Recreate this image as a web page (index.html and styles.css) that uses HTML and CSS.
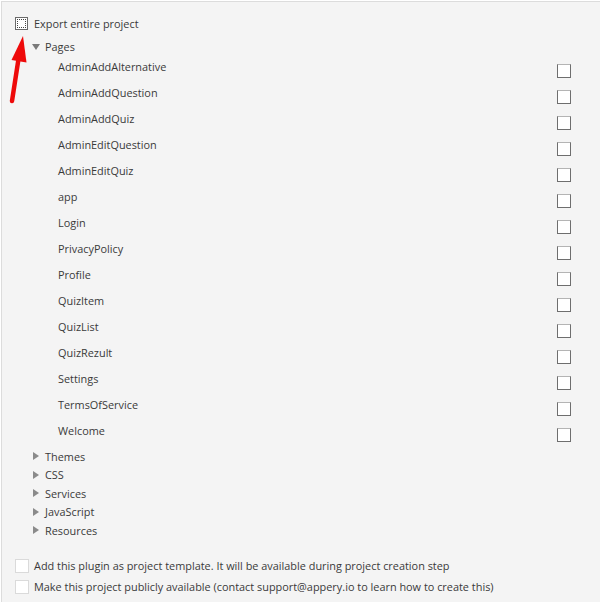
FILE: index.html
```html
<!DOCTYPE html>
<html>
<head>
<meta charset="utf-8">
<link rel="stylesheet" href="styles.css">
</head>
<body>
<div class="panel">
  <div class="export-row">
    <span class="cb-focus"><span class="cb-dots"></span></span>
    <span class="label">Export entire project</span>
  </div>
  <div class="folder open">
    <span class="tri-down"></span><span class="label">Pages</span>
  </div>
  <ul class="pages">
    <li><span>AdminAddAlternative</span><span class="cb"></span></li>
    <li><span>AdminAddQuestion</span><span class="cb"></span></li>
    <li><span>AdminAddQuiz</span><span class="cb"></span></li>
    <li><span>AdminEditQuestion</span><span class="cb"></span></li>
    <li><span>AdminEditQuiz</span><span class="cb"></span></li>
    <li><span>app</span><span class="cb"></span></li>
    <li><span>Login</span><span class="cb"></span></li>
    <li><span>PrivacyPolicy</span><span class="cb"></span></li>
    <li><span>Profile</span><span class="cb"></span></li>
    <li><span>QuizItem</span><span class="cb"></span></li>
    <li><span>QuizList</span><span class="cb"></span></li>
    <li><span>QuizRezult</span><span class="cb"></span></li>
    <li><span>Settings</span><span class="cb"></span></li>
    <li><span>TermsOfService</span><span class="cb"></span></li>
    <li><span>Welcome</span><span class="cb"></span></li>
  </ul>
  <ul class="folders">
    <li><span class="tri-right"></span>Themes</li>
    <li><span class="tri-right"></span>CSS</li>
    <li><span class="tri-right"></span>Services</li>
    <li><span class="tri-right"></span>JavaScript</li>
    <li><span class="tri-right"></span>Resources</li>
  </ul>
  <div class="options">
    <div class="opt"><span class="cb-light"></span>Add this plugin as project template. It will be available during project creation step</div>
    <div class="opt"><span class="cb-light"></span>Make this project publicly available (contact support@appery.io to learn how to create this)</div>
  </div>
  <svg class="arrow" width="40" height="110" viewBox="0 0 40 110">
    <line x1="11" y1="100" x2="17.5" y2="58" stroke="#ee0a0a" stroke-width="4.5" stroke-linecap="round"/>
    <polygon points="22,35 10.5,59 25.5,61.5" fill="#ee0a0a"/>
  </svg>
</div>
</body>
</html>
```
FILE: styles.css
```css
html, body {
  margin: 0;
  padding: 0;
  background: #ffffff;
}
body {
  font-family: "Open Sans", "Liberation Sans", sans-serif;
  font-size: 10.9px;
  color: #3a3a3a;
}
.panel {
  position: relative;
  margin: 1px 0 0 1px;
  border-top: 1px solid #dcdcdc;
  border-left: 1px solid #dcdcdc;
  background: #f4f4f4;
  height: 601px;
  overflow: hidden;
  padding-top: 12px;
  box-sizing: border-box;
}
.export-row {
  display: flex;
  align-items: flex-start;
  height: 20px;
  line-height: 20px;
  padding-left: 13px;
}
.cb-focus {
  box-sizing: border-box;
  width: 13px;
  height: 13px;
  margin-top: 3px;
  border: 1px solid #6a6a6a;
  background: #fff;
  padding: 1px;
  display: block;
}
.cb-dots {
  display: block;
  box-sizing: border-box;
  width: 100%;
  height: 100%;
  border: 1px dotted #444;
}
.export-row .label {
  margin-left: 6px;
}
.folder {
  display: flex;
  align-items: center;
  margin-top: 5px;
  height: 15px;
  line-height: 15px;
  padding-left: 30px;
}
.tri-down {
  width: 0;
  height: 0;
  border-left: 4px solid transparent;
  border-right: 4px solid transparent;
  border-top: 6px solid #7a7a7a;
  margin-right: 5px;
  margin-top: 1px;
}
.pages, .folders {
  list-style: none;
  margin: 0;
  padding: 0;
}
.pages li {
  display: flex;
  justify-content: space-between;
  align-items: flex-start;
  height: 26px;
  line-height: 26px;
  padding-left: 56px;
  padding-right: 29px;
}
.cb {
  box-sizing: border-box;
  width: 14px;
  height: 14px;
  margin-top: 10px;
  background: #fff;
  border: 1px solid #6e6e6e;
  border-top-color: #b4b4b4;
}
.folders {
  margin-top: 3.5px;
}
.folders li {
  display: flex;
  align-items: center;
  height: 18.5px;
  line-height: 18.5px;
  padding-left: 31px;
}
.tri-right {
  width: 0;
  height: 0;
  border-top: 4px solid transparent;
  border-bottom: 4px solid transparent;
  border-left: 6px solid #8a8a8a;
  margin-right: 6px;
  margin-top: -1px;
}
.options {
  margin-top: 15px;
}
.opt {
  display: flex;
  align-items: flex-start;
  height: 21px;
  line-height: 21px;
  padding-left: 13px;
}
.cb-light {
  box-sizing: border-box;
  width: 14px;
  height: 14px;
  margin-top: 4px;
  margin-right: 5px;
  background: #fff;
  border: 1px solid #dadada;
}
.arrow {
  position: absolute;
  left: -1px;
  top: -1px;
}
```
